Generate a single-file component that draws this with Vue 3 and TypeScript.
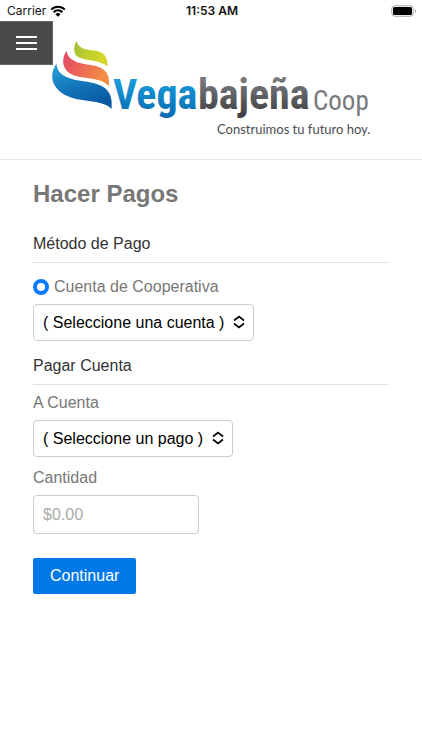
<script setup lang="ts">
import { ref } from 'vue'

const method = ref('coop')
const account = ref('')
const payee = ref('')
const amount = ref('')
</script>

<template>
  <div class="page">
    <div class="status">
      <div class="carrier">
        <span>Carrier</span>
        <svg class="wifi" viewBox="0 0 16 12" aria-hidden="true">
          <path d="M1.2 4.6a9.6 9.6 0 0 1 13.6 0M3.6 7.2a6.2 6.2 0 0 1 8.8 0" />
          <path class="dot" d="M8 11.8 5.4 9.2a3.7 3.7 0 0 1 5.2 0z" />
        </svg>
      </div>
      <span class="clock">11:53 AM</span>
      <svg class="battery" viewBox="0 0 26 12" aria-hidden="true">
        <rect class="shell" x="0.75" y="0.75" width="21.5" height="10.5" rx="3" />
        <rect x="2" y="2" width="19" height="8" rx="1.6" />
        <path class="cap" d="M24 4v4c1.3-.6 1.3-3.4 0-4z" />
      </svg>
    </div>

    <header class="banner">
      <button class="menu" type="button" aria-label="Menú">
        <svg viewBox="0 0 22 16" aria-hidden="true">
          <path d="M1 2h21M1 8h21M1 14h21" />
        </svg>
      </button>
      <svg class="logo" viewBox="49 38 324 100" role="img" aria-label="Vegabajeña Coop">
        <defs>
          <linearGradient id="lime" x1="0" y1="0" x2="1" y2="0.4">
            <stop offset="0" stop-color="#9fbd3c" />
            <stop offset="0.5" stop-color="#bfce2c" />
            <stop offset="1" stop-color="#d5d62a" />
          </linearGradient>
          <linearGradient id="coral" x1="0" y1="0" x2="1" y2="0.5">
            <stop offset="0" stop-color="#e04468" />
            <stop offset="0.45" stop-color="#ec6459" />
            <stop offset="1" stop-color="#f38f43" />
          </linearGradient>
          <linearGradient id="azure" x1="0" y1="0" x2="0.5" y2="1">
            <stop offset="0" stop-color="#2da5da" />
            <stop offset="0.5" stop-color="#1479bd" />
            <stop offset="1" stop-color="#0a5aa3" />
          </linearGradient>
          <linearGradient id="vega" x1="0" y1="0" x2="0" y2="1">
            <stop offset="0.2" stop-color="#189bd9" />
            <stop offset="1" stop-color="#0868b0" />
          </linearGradient>
          <linearGradient id="slate" x1="0" y1="0" x2="0" y2="1">
            <stop offset="0.2" stop-color="#77787b" />
            <stop offset="0.9" stop-color="#434346" />
          </linearGradient>
        </defs>
        <path fill="url(#lime)" d="M76.5 41C78 48 86 50 93 50.5C101 51 108 54 107.5 66.5C99 59.500 87 61 79 57.500C73 54.500 73 47 76.5 41Z" />
        <path fill="url(#coral)" d="M66.5 51C68 60 77 63 87 64.5C100 66 110.500 69 109 86C100 77 85 79.500 73 75C62 70.500 61 59 66.5 51Z" />
        <path fill="url(#azure)" d="M56.500 63.500C57 75 68 79 82 81C100 83.500 114 87 111.500 109C103 99 80 103 65 95C49.500 86 50 73 56.500 63.500Z" />
        <text class="word" x="113" y="109" fill="url(#vega)">Vega</text>
        <text class="word" x="198" y="109" fill="url(#slate)">bajeña</text>
        <text class="coop" x="313" y="110">Coop</text>
        <text class="tag" x="217" y="134">Construimos tu futuro hoy.</text>
      </svg>
    </header>

    <main>
      <h1>Hacer Pagos</h1>
      <form @submit.prevent>
        <h2>Método de Pago</h2>
        <label class="choice">
          <input v-model="method" type="radio" name="method" value="coop" />
          <span>Cuenta de Cooperativa</span>
        </label>
        <div class="picker">
          <select v-model="account" aria-label="Cuenta de Cooperativa">
            <option value="">( Seleccione una cuenta )</option>
          </select>
          <svg viewBox="0 0 12 14" aria-hidden="true"><path d="M1 5.5 6 1.5l5 4M1 8.5l5 4 5-4" /></svg>
        </div>

        <h2 class="second">Pagar Cuenta</h2>
        <label class="field" for="payee">A Cuenta</label>
        <div class="picker">
          <select id="payee" v-model="payee">
            <option value="">( Seleccione un pago )</option>
          </select>
          <svg viewBox="0 0 12 14" aria-hidden="true"><path d="M1 5.5 6 1.5l5 4M1 8.5l5 4 5-4" /></svg>
        </div>

        <label class="field amount-label" for="amount">Cantidad</label>
        <input id="amount" v-model="amount" class="amount" type="text" inputmode="decimal" placeholder="$0.00" />
        <button class="submit" type="submit">Continuar</button>
      </form>
    </main>
  </div>
</template>

<style>
body {
  background: #fff;
}
</style>

<style scoped>
.page {
  font-family: 'Liberation Sans', Arial, sans-serif;
  font-size: 16px;
  line-height: 20px;
  color: #777;
}
.status {
  display: grid;
  grid-template-columns: 1fr auto 1fr;
  align-items: center;
  height: 21px;
  padding: 0 5px 0 7px;
  font-family: Inter, sans-serif;
  font-size: 12px;
  color: #111;
}
.carrier {
  display: flex;
  align-items: center;
  gap: 4px;
}
.wifi {
  width: 16px;
  height: 12px;
  fill: none;
  stroke: #000;
  stroke-width: 2;
}
.wifi .dot {
  fill: #000;
  stroke: none;
}
.clock {
  font-weight: 600;
}
.battery {
  justify-self: end;
  width: 26px;
  height: 12px;
}
.battery .shell {
  fill: none;
  stroke: #a5a5a5;
}
.battery .cap {
  fill: #999;
}
.banner {
  position: relative;
  display: flex;
  justify-content: center;
  padding: 17px 0 21px;
  border-bottom: 1px solid #e9e9e9;
}
.menu {
  position: absolute;
  top: 0;
  left: 0;
  display: grid;
  place-items: center;
  width: 53px;
  height: 44px;
  padding: 0;
  border: 1px solid #666;
  border-left: 0;
  background: #4a4a4a;
}
.menu svg {
  width: 22px;
  height: 16px;
  stroke: #fff;
  stroke-width: 2;
}
.logo {
  width: 324px;
  height: 100px;
}
.word {
  font-family: 'Liberation Sans Narrow', 'Roboto Condensed', 'Open Sans Condensed', 'Liberation Sans', sans-serif;
  font-size: 42px;
  font-weight: 700;
}
.coop {
  font-family: 'Liberation Sans Narrow', 'Roboto Condensed', 'Liberation Sans', sans-serif;
  font-size: 27px;
  fill: #77787b;
}
.tag {
  font-family: Lato, sans-serif;
  font-size: 13px;
  fill: #4c4c4e;
}
main {
  padding: 18px 33px 32px;
}
h1 {
  margin: 0 0 24px;
  font-size: 24px;
  line-height: 32px;
}
h2 {
  margin: 0 0 14px;
  padding-bottom: 8px;
  border-bottom: 1px solid #e2e2e2;
  font-size: 16px;
  font-weight: 400;
  color: #333;
}
.second {
  margin: 15px 0 8px;
}
.choice {
  display: flex;
  align-items: center;
  gap: 5px;
  margin-bottom: 7px;
}
.choice input {
  appearance: none;
  width: 16px;
  height: 16px;
  margin: 0;
  border: 4px solid #0a7aff;
  border-radius: 50%;
  background: #fff;
}
.picker {
  position: relative;
  width: fit-content;
}
select,
.amount {
  appearance: none;
  box-sizing: border-box;
  display: block;
  margin: 0;
  border: 1px solid #ccc;
  border-radius: 4px;
  background: #fff;
  font: inherit;
}
select {
  height: 37px;
  padding: 0 28px 0 9px;
  color: #000;
}
.picker svg {
  position: absolute;
  top: 11px;
  right: 9px;
  width: 12px;
  height: 14px;
  fill: none;
  stroke: #000;
  stroke-width: 1.7;
  pointer-events: none;
}
.field {
  display: block;
  margin-bottom: 7px;
}
.amount-label {
  margin-top: 11px;
}
.amount {
  width: 166px;
  height: 39px;
  padding: 0 9px;
  color: #333;
}
.amount::placeholder {
  color: #aaa;
  opacity: 1;
}
.submit {
  margin-top: 24px;
  padding: 8px 17px;
  border: 0;
  border-radius: 2px;
  background: #0078e7;
  font: inherit;
  color: #fff;
}
</style>
